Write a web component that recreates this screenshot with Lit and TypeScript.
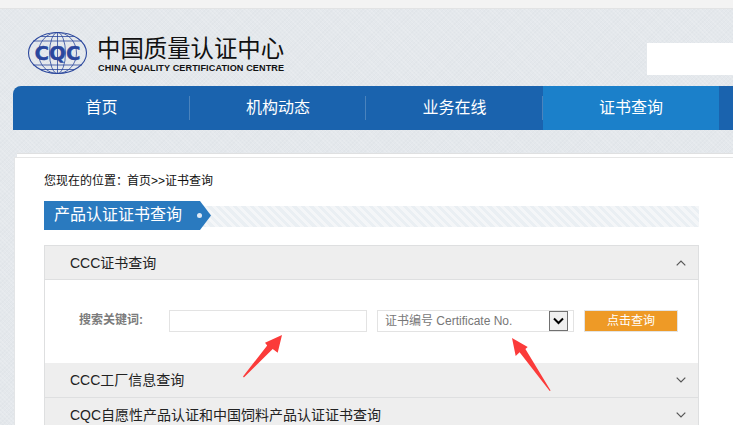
import { LitElement, html, css, svg, unsafeCSS } from "lit";
import { customElement } from "lit/decorators.js";

const FONT = unsafeCSS(`"Liberation Sans", Arial, "Noto Sans CJK SC", sans-serif`);

const chevron = (up: boolean) => html`<svg class="chev" width="10" height="6" viewBox="0 0 10 6">
  <path d=${up ? "M.7 5.3 5 1l4.3 4.3" : "M.7.7 5 5 9.3.7"} fill="none" stroke="#555" stroke-width="1.2"/></svg>`;

const logo = html`<svg class="logo" width="61" height="44" viewBox="0 0 61 44">
  <g fill="none" stroke="#2b479d" stroke-width=".8">
    <ellipse cx="30.5" cy="22" rx="29" ry="20.5" stroke-width="1.1"/>
    <ellipse cx="30.5" cy="22" rx="19" ry="20.5"/>
    <ellipse cx="30.5" cy="22" rx="8" ry="20.5"/>
    <path d="M30.5 1.5v41M6 10h49M13 5.5h35M13 38.5h35M6 34h49"/>
  </g>
  <text x="30.5" y="29" text-anchor="middle" class="logotext" textLength="46" lengthAdjust="spacingAndGlyphs">CQC</text>
</svg>`;

const arrow = (cls: string, d: string, w: number, h: number) => html`<svg class="arrow ${cls}" width=${w} height=${h} viewBox="0 0 ${w} ${h}">
  ${svg`<path d=${d} fill="#fb3b3a"/>`}</svg>`;

@customElement("app-root")
export class AppRoot extends LitElement {
  static styles = css`
    :host { display: block; width: 733px; height: 425px; overflow: hidden; position: relative; font-family: ${FONT}; }
    * { box-sizing: border-box; }
    .page { height: 425px; overflow: hidden;
      background-color: #e4e8ec;
      background-image: repeating-linear-gradient(45deg, rgba(255,255,255,.14) 0 1px, transparent 1px 3px),
        repeating-linear-gradient(-45deg, rgba(120,130,140,.03) 0 1px, transparent 1px 3px); }
    .top { height: 9px; background: #f3f3f3; border-bottom: 1px solid #e2e3e4; }
    .header { height: 77px; padding-left: 27px; display: flex; align-items: flex-start; }
    .logo { margin-top: 22px; flex: none; display: block; }
    .logotext { font: 700 20px "DejaVu Sans", sans-serif; fill: #2b479d; stroke: #2b479d; stroke-width: .3; }
    .brand { margin: 28px 0 0 9px; width: 190px; color: #111; }
    .brand-cn { font-size: 23.4px; line-height: 25px; white-space: nowrap; }
    .brand-en { font-size: 9.1px; line-height: 11px; font-weight: 700; white-space: nowrap; letter-spacing: .1px; margin-top: 1px; padding-left: 1px; }
    .searchbox { margin: 34px 0 0 auto; width: 86px; height: 32px; background: #fff; }
    .nav { margin-left: 13px; height: 44px; background: #1a63ae; border-top-left-radius: 8px; display: flex; }
    .nav-item { width: 176px; flex: none; color: #fff; font-size: 16px; line-height: 44px; text-align: center; position: relative; }
    .nav-item:first-child, .nav-item:nth-child(3) { width: 177px; }
    .nav-item .div { position: absolute; right: 0; top: 10px; height: 24px; width: 1px; background: #4a83bd; }
    .nav-item.active { background: #1b80ca; }
    .card-back { margin: 23px 0 0 17px; background: #fff; border-top: 1px solid #dfe0e1; height: 4px; }
    .card { margin-left: 14px; height: 300px; background: #fff; border-top: 1px solid #e6e6e6; border-left: 1px solid #e3e5e7; padding: 0 34px 0 29px; }
    .crumb { margin-top: 15px; height: 16px; font-size: 12px; line-height: 16px; color: #111; white-space: nowrap; }
    .crumb span { margin-right: -1px; }
    .title { margin-top: 12px; height: 29px; display: flex; align-items: center; position: relative; }
    .title-strip { position: absolute; left: 150px; right: 0; top: 5px; height: 21px;
      background: repeating-linear-gradient(45deg, #eaeff3 0 3px, #f4f6f8 3px 6px); }
    .title-tab { position: relative; height: 29px; width: 167px; background: #2a7abf; color: #fff; font-size: 16px; line-height: 28px;
      padding-left: 10px; white-space: nowrap; clip-path: polygon(0 0, 156px 0, 167px 50%, 156px 100%, 0 100%); }
    .dot { position: absolute; left: 153px; top: 12px; width: 5px; height: 5px; border-radius: 50%; background: #dfeaf5; }
    .acc { margin-top: 15px; border-left: 1px solid #dedfe0; border-right: 1px solid #dedfe0; }
    .acc-head { display: flex; align-items: center; justify-content: space-between; background: #eee; padding: 0 12px 0 25px;
      font-size: 14px; color: #222; white-space: nowrap; }
    .acc-head span { margin-bottom: 2px; }
    .h1 { height: 35px; border-top: 1px solid #dedfe0; border-bottom: 1px solid #dedfe0; }
    .h2 { height: 35px; border-bottom: 1px solid #dedfe0; }
    .h3 { height: 34px; }
    .chev { display: block; flex: none; }
    .form { height: 83px; padding: 30px 0 0 34px; display: flex; align-items: flex-start; }
    .label { width: 90px; font-size: 12px; font-weight: 700; color: #7b7b7b; line-height: 21px; flex: none; white-space: nowrap; }
    .input { width: 198px; height: 22px; border: 1px solid #e3e3e3; background: #fff; flex: none; }
    .select { margin-left: 10px; width: 197px; height: 22px; border: 1px solid #e3e3e3; background: #fff; flex: none; position: relative;
      font-size: 12px; color: #777; line-height: 20px; padding-left: 7px; white-space: nowrap; }
    .sel-btn { position: absolute; left: 171px; top: 0; width: 19px; height: 20px; border: 1px solid #707070; background: #efefef;
      display: flex; align-items: center; justify-content: center; }
    .btn { margin-left: 10px; width: 94px; height: 22px; background: #ee9a26; border: 1px solid #e3e3e3; color: #fff; font-size: 12px; line-height: 21px; text-align: center; flex: none; }
    .arrow { position: absolute; display: block; }
    .a1 { left: 243px; top: 335px; }
    .a2 { left: 512px; top: 338px; }
  `;

  render() {
    return html`<div class="page">
      <div class="top"></div>
      <div class="header">
        ${logo}
        <div class="brand">
          <div class="brand-cn">中国质量认证中心</div>
          <div class="brand-en">CHINA QUALITY CERTIFICATION CENTRE</div>
        </div>
        <div class="searchbox"></div>
      </div>
      <nav class="nav">
        <div class="nav-item">首页<span class="div"></span></div>
        <div class="nav-item">机构动态<span class="div"></span></div>
        <div class="nav-item">业务在线<span class="div"></span></div>
        <div class="nav-item active">证书查询</div>
      </nav>
      <div class="card-back"></div>
      <div class="card">
        <div class="crumb"><span>您现在的位置：</span>首页&gt;&gt;证书查询</div>
        <div class="title">
          <div class="title-strip"></div>
          <div class="title-tab">产品认证证书查询<span class="dot"></span></div>
        </div>
        <div class="acc">
          <div class="acc-head h1"><span>CCC证书查询</span>${chevron(true)}</div>
          <div class="form">
            <div class="label">搜索关键词:</div>
            <div class="input"></div>
            <div class="select">证书编号 Certificate No.
              <span class="sel-btn"><svg width="11" height="8" viewBox="0 0 11 8"><path d="M1 1.5l4.5 4.5L10 1.5" fill="none" stroke="#000" stroke-width="2"/></svg></span>
            </div>
            <div class="btn">点击查询</div>
          </div>
          <div class="acc-head h2"><span>CCC工厂信息查询</span>${chevron(false)}</div>
          <div class="acc-head h3"><span>CQC自愿性产品认证和中国饲料产品认证证书查询</span>${chevron(false)}</div>
        </div>
      </div>
      ${arrow("a1", "M39 0 L34.7 17.7 L29.7 14 L.9 42.4 L0 41.6 L24.2 10.4 L22 7.7Z", 40, 44)}
      ${arrow("a2", "M0 0 L15.7 9 L13.4 11 L38.6 52.6 L37.7 53 L7.6 14.2 L3.7 18Z", 40, 55)}
    </div>`;
  }
}
